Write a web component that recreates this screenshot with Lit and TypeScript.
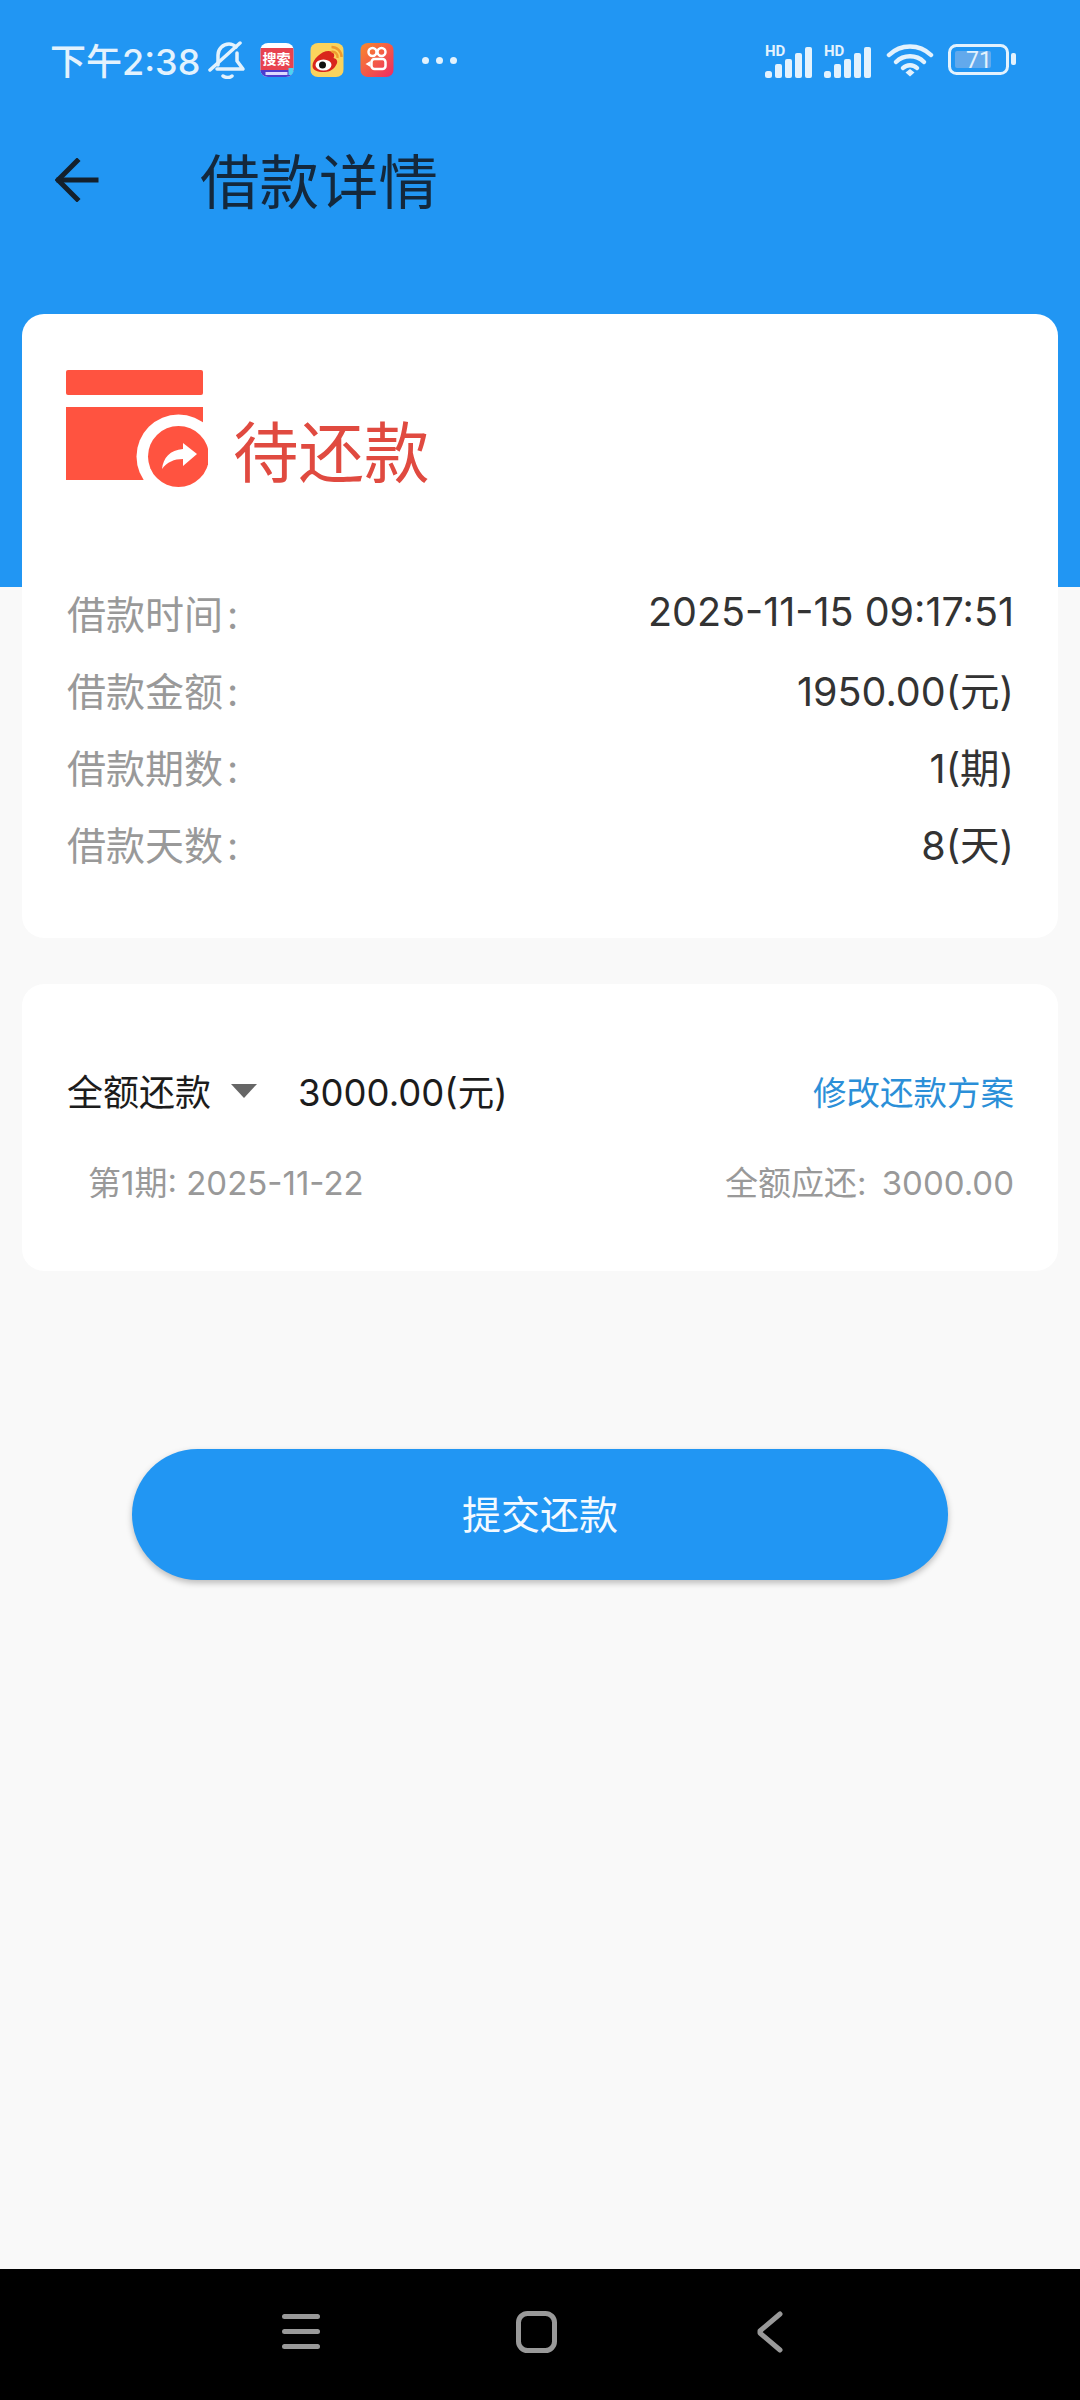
import { LitElement, css, html } from "lit";
import { customElement } from "lit/decorators.js";

const rows = [
  ["借款时间", "2025-11-15 09:17:51"],
  ["借款金额", "1950.00(元)"],
  ["借款期数", "1(期)"],
  ["借款天数", "8(天)"],
];

const signal = html`
  <svg class="signal" width="50" height="38" viewBox="0 -4 50 38">
    <text x="1" y="11" class="hd">HD</text>
    <rect x="1" y="26" width="7" height="7" rx="2.500" fill="#e3f2fd" />
    <rect x="11" y="19" width="7" height="14" rx="2" fill="#e3f2fd" />
    <rect x="21" y="14" width="7" height="19" rx="2" fill="#e3f2fd" />
    <rect x="31" y="8" width="7" height="25" rx="2" fill="#e3f2fd" />
    <rect x="41" y="2" width="7" height="31" rx="2" fill="#e3f2fd" />
  </svg>
`;

@customElement("app-root")
export class AppRoot extends LitElement {
  static styles = css`
    :host {
      display: block;
      width: 1080px;
      height: 2400px;
      font-family: Inter, "Noto Sans CJK SC", sans-serif;
    }
    .page {
      height: 2400px;
      display: flex;
      flex-direction: column;
      background: linear-gradient(#2196f3 587px, #f9f9f9 587px);
    }

    /* status bar */
    .status {
      height: 120px;
      display: flex;
      align-items: center;
      padding: 0 62px 0 50px;
      box-sizing: border-box;
      color: #e3f2fd;
    }
    .time {
      font-size: 36px;
      font-weight: 500;
      width: 158px;
      white-space: nowrap;
      margin-top: -2px;
    }
    .app {
      width: 34px;
      height: 34px;
      margin-left: 16px;
      border-radius: 8px;
      overflow: hidden;
      display: block;
    }
    .app.first {
      margin-left: 14px;
    }
    .dots {
      display: flex;
      gap: 7px;
      margin-left: 28px;
    }
    .dots i {
      width: 7px;
      height: 7px;
      border-radius: 50%;
      background: #e3f2fd;
    }
    .right {
      margin-left: auto;
      display: flex;
      align-items: center;
    }
    .signal {
      margin-right: 9px;
    }
    .hd {
      font: 700 15px Roboto, sans-serif;
      fill: #e3f2fd;
    }

    /* app bar */
    .bar {
      height: 120px;
      display: flex;
      align-items: center;
      padding-left: 55px;
    }
    .bar svg {
      display: block;
    }
    .title {
      margin: 3px 0 0 101px;
      font-size: 59.500px;
      line-height: 80px;
      color: #14283c;
    }

    /* cards */
    .content {
      padding: 74px 22px 0;
      display: flex;
      flex-direction: column;
    }
    .card {
      background: #fff;
      border-radius: 22px;
    }
    .loan {
      height: 624px;
      box-sizing: border-box;
      padding: 56px 44px 0 45px;
      margin-bottom: 46px;
    }
    .state {
      display: flex;
      align-items: flex-start;
      height: 110px;
      margin-bottom: 93px;
    }
    .state svg {
      display: block;
      flex: none;
    }
    .state-text {
      margin: 44px 0 0 25px;
      font-size: 65.500px;
      line-height: 80px;
      color: #e04a40;
    }
    .kv {
      display: flex;
      justify-content: space-between;
      align-items: center;
      height: 77px;
      font-size: 39.500px;
      color: #333;
    }
    .kv span:first-child {
      color: #999;
      font-size: 39px;
    }
    .kv b {
      font-weight: 400;
      margin-left: 4px;
    }
    .plan {
      height: 287px;
      box-sizing: border-box;
      padding: 68px 44px 0 45px;
    }
    .plan-main {
      display: flex;
      align-items: center;
      height: 76px;
      font-size: 36px;
      color: #1c1c1c;
    }
    .tri {
      width: 0;
      height: 0;
      margin: 2px 0 0 20px;
      border-left: 13px solid transparent;
      border-right: 13px solid transparent;
      border-top: 14px solid #666;
    }
    .amount {
      margin-left: 41px;
      font-size: 36.500px;
    }
    .edit {
      margin-left: auto;
      color: #2b8fd8;
      font-size: 33.500px;
    }
    .plan-sub {
      display: flex;
      justify-content: space-between;
      margin-top: 29px;
      padding-left: 21px;
      font-size: 33px;
      color: #999;
    }
    .plan-sub b {
      font-weight: 400;
      margin-right: 6px;
    }

    .submit {
      align-self: center;
      width: 816px;
      height: 131px;
      margin-top: 178px;
      padding-bottom: 5px;
      box-sizing: border-box;
      display: flex;
      align-items: center;
      justify-content: center;
      border-radius: 66px;
      background: #2196f3;
      color: #f4faff;
      font-size: 39px;
      box-shadow: 0 3px 6px rgba(0, 0, 0, 0.25);
    }

    /* navigation bar */
    .nav {
      margin-top: auto;
      height: 131px;
      background: #000;
      display: flex;
      align-items: flex-start;
      padding: 42px 0 0 282px;
      box-sizing: border-box;
    }
    .nav svg {
      display: block;
    }
    .nav .home {
      margin-left: 196px;
    }
    .nav .back {
      margin-left: 200px;
    }
  `;

  render() {
    return html`
      <div class="page">
        <div class="status">
          <span class="time">下午2:38</span>
          <svg width="38" height="38" viewBox="0 0 38 38" fill="none" stroke="#e3f2fd" stroke-width="3.500" stroke-linecap="round" stroke-linejoin="round">
            <path d="M10 24V14C10 8 15 3 21 3c3 0 5 1 7 3" />
            <path d="M29 12v8l6 8H9" />
            <path d="M2 29 32 2" />
            <path d="M15 35c3 2 7 2 9 0" />
          </svg>
          <svg class="app first" viewBox="0 0 33 34">
            <rect width="33" height="34" fill="#fff" />
            <rect y="5" width="33" height="23" fill="#e8424f" />
            <rect y="27" width="33" height="7" fill="#4b3ccf" />
            <rect x="5" y="29" width="22" height="3" fill="#dcd8ff" />
            <text x="16" y="21" text-anchor="middle" font-size="14" font-weight="700" fill="#fff" font-family="Noto Sans CJK SC">搜索</text>
            <path d="M28 25h5v7h-5z" fill="#4fd3ef" />
          </svg>
          <svg class="app" viewBox="0 0 33 34">
            <rect width="33" height="34" fill="#fbd35d" />
            <path d="M2 23c0-7 9-15 16-15 5 0 7 4 5 7 4 1 5 4 2 8-3 5-8 6-12 6C7 29 2 27 2 23z" fill="#d9261c" />
            <ellipse cx="13" cy="22" rx="8" ry="5.500" fill="#fff" />
            <circle cx="12" cy="22" r="3.500" fill="#111" />
            <path d="M21 9a5 5 0 0 1 6 6M21 4a10 10 0 0 1 10 10" fill="none" stroke="#ef9a2e" stroke-width="2.500" />
          </svg>
          <svg class="app" viewBox="0 0 33 34">
            <defs>
              <linearGradient id="ks" x1="0" y1="0" x2="1" y2="1">
                <stop offset="0" stop-color="#f98a2c" />
                <stop offset="1" stop-color="#ee2a62" />
              </linearGradient>
            </defs>
            <rect width="33" height="34" fill="url(#ks)" />
            <g fill="none" stroke="#fff" stroke-width="2.500">
              <circle cx="12" cy="9" r="4" />
              <circle cx="21" cy="9" r="4" />
              <rect x="11" y="16" width="14" height="10" rx="3" />
            </g>
            <path d="M10 18 5 21l5 3z" fill="#fff" />
          </svg>
          <span class="dots"><i></i><i></i><i></i></span>
          <div class="right">
            ${signal}${signal}
            <svg style="margin-left:4px" width="48" height="34" viewBox="0 0 48 34" fill="none" stroke="#e3f2fd" stroke-width="4.500" stroke-linecap="round">
              <path d="M3 12a30 30 0 0 1 42 0" />
              <path d="M10 19a20 20 0 0 1 28 0" />
              <path d="M17 25a10 10 0 0 1 14 0" />
              <path d="M19.500 29.500 24 26l4.500 3.500L24 33.500z" fill="#e3f2fd" stroke="none" />
            </svg>
            <svg style="margin-left:14px" width="70" height="32" viewBox="0 0 70 32">
              <rect x="1.500" y="1.500" width="58" height="28" rx="7" fill="none" stroke="#e3f2fd" stroke-width="3" />
              <rect x="7" y="7" width="36" height="17" rx="2" fill="#62a9ec" />
              <rect x="63" y="9" width="5" height="12" rx="2" fill="#e3f2fd" />
              <text x="31" y="24" text-anchor="middle" font-size="23" fill="#e3f2fd" font-family="Roboto">71</text>
            </svg>
          </div>
        </div>

        <div class="bar">
          <svg width="44" height="44" viewBox="0 0 44 44" fill="none" stroke="#14202c" stroke-width="5" stroke-linecap="square">
            <path d="M41 22H4" />
            <path d="M22 3 3 22l19 19" />
          </svg>
          <span class="title">借款详情</span>
        </div>

        <div class="content">
          <div class="card loan">
            <div class="state">
              <svg width="142" height="118" viewBox="0 0 142 118" style="margin-left:-1px">
                <rect width="137" height="25" rx="2" fill="#ff5340" />
                <path d="M0 37h137v73H0z" fill="#ff5340" />
                <circle cx="112.500" cy="86.500" r="42" fill="#fff" />
                <circle cx="112.500" cy="86.500" r="30.500" fill="#ff5340" />
                <path d="M131 84 117 73v6c-13 1-20 9-21 20 5-7 12-10 21-10v7z" fill="#fff" />
              </svg>
              <span class="state-text">待还款</span>
            </div>
            ${rows.map(
              ([k, v]) => html`<div class="kv"><span>${k}<b>:</b></span><span>${v}</span></div>`,
            )}
          </div>

          <div class="card plan">
            <div class="plan-main">
              <span>全额还款</span>
              <i class="tri"></i>
              <span class="amount">3000.00(元)</span>
              <span class="edit">修改还款方案</span>
            </div>
            <div class="plan-sub">
              <span>第1期: 2025-11-22</span>
              <span>全额应还<b>:</b> 3000.00</span>
            </div>
          </div>

          <div class="submit">提交还款</div>
        </div>

        <div class="nav">
          <svg width="38" height="38" viewBox="0 0 38 38" fill="#999">
            <rect y="3" width="38" height="5" rx="2.500" />
            <rect y="18" width="38" height="5" rx="2.500" />
            <rect y="33" width="38" height="5" rx="2.500" />
          </svg>
          <svg class="home" width="41" height="42" viewBox="0 0 41 42" fill="none" stroke="#999" stroke-width="5">
            <rect x="2.500" y="2.500" width="36" height="37" rx="9" />
          </svg>
          <svg class="back" width="26" height="42" viewBox="0 0 26 42" fill="none" stroke="#999" stroke-width="5" stroke-linecap="round" stroke-linejoin="round">
            <path d="M23 3 3 20v2l20 17" />
          </svg>
        </div>
      </div>
    `;
  }
}
